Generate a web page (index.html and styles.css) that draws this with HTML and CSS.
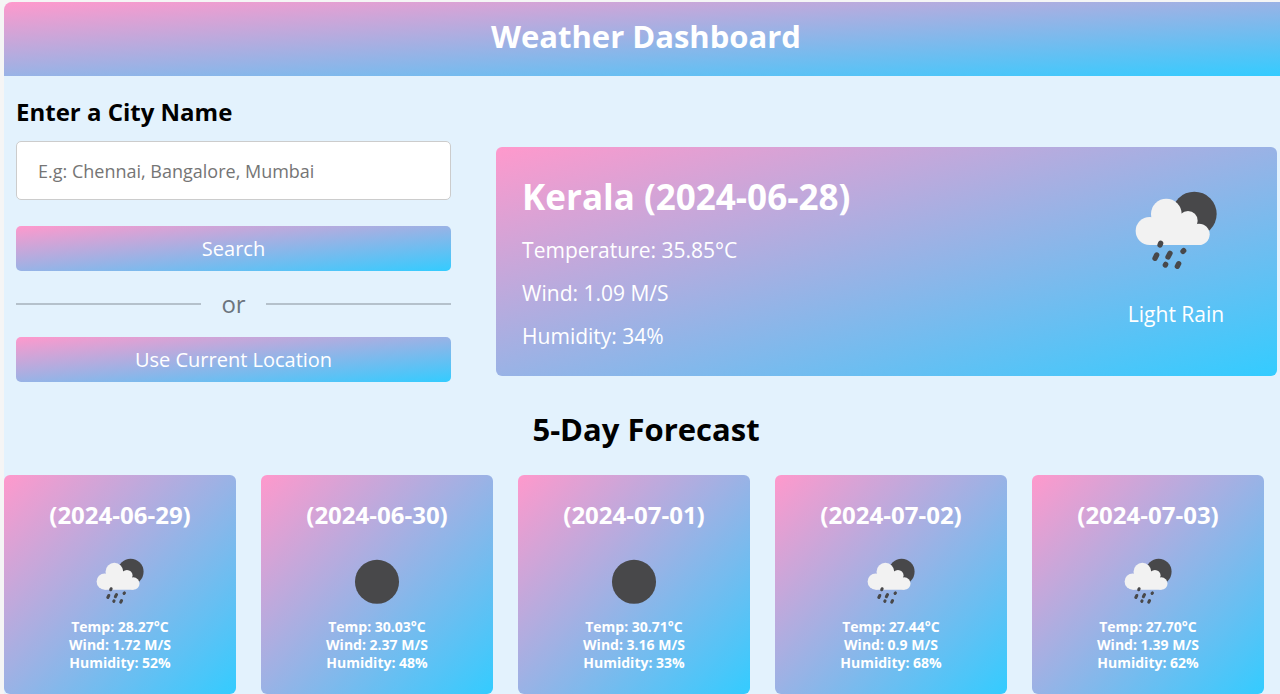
FILE: index.html
```html
<!DOCTYPE html>
<html lang="en">
<head>
<meta charset="utf-8">
<title>Weather Dashboard</title>
<link rel="stylesheet" href="styles.css">
</head>
<body>
<svg class="sprite" aria-hidden="true">
  <symbol id="rain" viewBox="49 30 300 300">
    <circle cx="254" cy="132" r="67" fill="#48484a"/>
    <g fill="#f2f2f2">
      <circle cx="120" cy="183" r="42"/>
      <circle cx="170" cy="132" r="46"/>
      <circle cx="235" cy="152" r="29"/>
      <circle cx="268" cy="193" r="32"/>
      <path d="M120 225v-60l50-33 65 20 33 40v33z"/>
    </g>
    <g stroke="#48484a" stroke-width="16" stroke-linecap="round" fill="none">
      <path d="M153 220l-2 5M141 255l-5 10M181 250l-6 11M222 242l-2 2M168 283l-1 2M207 281l-4 8"/>
    </g>
  </symbol>
  <symbol id="clear" viewBox="49 30 300 300">
    <circle cx="199" cy="184" r="114" fill="#48484a"/>
  </symbol>
</svg>
<div class="app">
  <header class="header"><h1>Weather Dashboard</h1></header>
  <main>
    <div class="top">
      <form class="search">
        <label for="city">Enter a City Name</label>
        <input id="city" type="text" placeholder="E.g: Chennai, Bangalore, Mumbai">
        <button type="button">Search</button>
        <div class="separator">or</div>
        <button type="button">Use Current Location</button>
      </form>
      <section class="current">
        <div>
          <h2>Kerala (2024-06-28)</h2>
          <p>Temperature: 35.85°C</p>
          <p>Wind: 1.09 M/S</p>
          <p>Humidity: 34%</p>
        </div>
        <div class="condition">
          <svg class="icon-large" aria-hidden="true"><use href="#rain"/></svg>
          <p>Light Rain</p>
        </div>
      </section>
    </div>
    <h2 class="forecast-title">5-Day Forecast</h2>
    <ul class="forecast">
      <li class="day">
        <h3>(2024-06-29)</h3>
        <svg class="icon-small" aria-hidden="true"><use href="#rain"/></svg>
        <p>Temp: 28.27°C</p><p>Wind: 1.72 M/S</p><p>Humidity: 52%</p>
      </li>
      <li class="day">
        <h3>(2024-06-30)</h3>
        <svg class="icon-small" aria-hidden="true"><use href="#clear"/></svg>
        <p>Temp: 30.03°C</p><p>Wind: 2.37 M/S</p><p>Humidity: 48%</p>
      </li>
      <li class="day">
        <h3>(2024-07-01)</h3>
        <svg class="icon-small" aria-hidden="true"><use href="#clear"/></svg>
        <p>Temp: 30.71°C</p><p>Wind: 3.16 M/S</p><p>Humidity: 33%</p>
      </li>
      <li class="day">
        <h3>(2024-07-02)</h3>
        <svg class="icon-small" aria-hidden="true"><use href="#rain"/></svg>
        <p>Temp: 27.44°C</p><p>Wind: 0.9 M/S</p><p>Humidity: 68%</p>
      </li>
      <li class="day">
        <h3>(2024-07-03)</h3>
        <svg class="icon-small" aria-hidden="true"><use href="#rain"/></svg>
        <p>Temp: 27.70°C</p><p>Wind: 1.39 M/S</p><p>Humidity: 62%</p>
      </li>
    </ul>
  </main>
</div>
</body>
</html>
```
FILE: styles.css
```css
* {
  box-sizing: border-box;
  margin: 0;
  padding: 0;
}

html {
  overflow: hidden;
  background: #f5f5f5;
}

body {
  padding: 2px 0 0 4px;
  font-family: "Open Sans", "Noto Sans", sans-serif;
}

.sprite {
  position: absolute;
  width: 0;
  height: 0;
}

/* The dashboard runs slightly past the right edge of the window. */
.app {
  margin-right: -8px;
  background: #e3f2fd;
  border-radius: 8px 8px 0 0;
}

.header,
.search button,
.current,
.day {
  background: linear-gradient(to bottom right, #ff99cc, #33ccff);
  color: #fff;
}

.header {
  padding: 12px 0 18px;
  border-radius: 8px 8px 0 0;
  text-align: center;
}

.header h1 {
  font-size: 31px;
  line-height: 44px;
}

.top {
  display: grid;
  grid-template-columns: 39fr 70fr;
  gap: 45px;
  align-items: end;
  padding: 19px 11px 0 12px;
}

.search {
  display: flex;
  flex-direction: column;
}

.search label {
  margin-bottom: 13px;
  font-size: 24px;
  font-weight: 700;
  line-height: 33px;
}

.search input {
  height: 59px;
  margin-bottom: 26px;
  padding: 0 21px;
  border: 1px solid #ccc;
  border-radius: 5px;
  background: #fff;
  font: 18px "Open Sans", "Noto Sans", sans-serif;
}

.search input::placeholder {
  color: #757575;
}

.search button {
  height: 45px;
  border: 0;
  border-radius: 5px;
  font: 20px "Open Sans", "Noto Sans", sans-serif;
  cursor: pointer;
}

.separator {
  display: flex;
  align-items: center;
  gap: 20px;
  margin: 16px 0;
  color: #6c757d;
  font-size: 24px;
  line-height: 34px;
}

.separator::before,
.separator::after {
  content: "";
  flex: 1;
  height: 2px;
  background: #b5c1cb;
}

.current {
  display: flex;
  justify-content: space-between;
  margin-bottom: 6px;
  padding: 25px 51px 26px 26px;
  border-radius: 6px;
}

.current h2 {
  font-size: 35px;
  line-height: 49px;
}

.current p {
  margin-top: 15px;
  font-size: 21px;
  font-weight: 500;
  line-height: 28px;
}

.condition {
  padding-top: 8px;
  text-align: center;
}

.icon-large {
  display: block;
  width: 100px;
  height: 100px;
  margin: 0 auto;
}

.condition p {
  margin-top: 20px;
}

.forecast-title {
  margin: 25px 0 24px;
  font-size: 31px;
  line-height: 44px;
  text-align: center;
}

.forecast {
  display: grid;
  grid-template-columns: repeat(5, 1fr);
  gap: 25px;
  padding-right: 24px;
  list-style: none;
}

.day {
  padding: 23px 10px 22px;
  border-radius: 6px;
  text-align: center;
}

.day h3 {
  font-size: 24px;
  line-height: 33px;
}

.icon-small {
  display: block;
  width: 58px;
  height: 58px;
  margin: 21px auto 8px;
}

.day p {
  font-size: 14px;
  font-weight: 700;
  line-height: 18px;
}
```
